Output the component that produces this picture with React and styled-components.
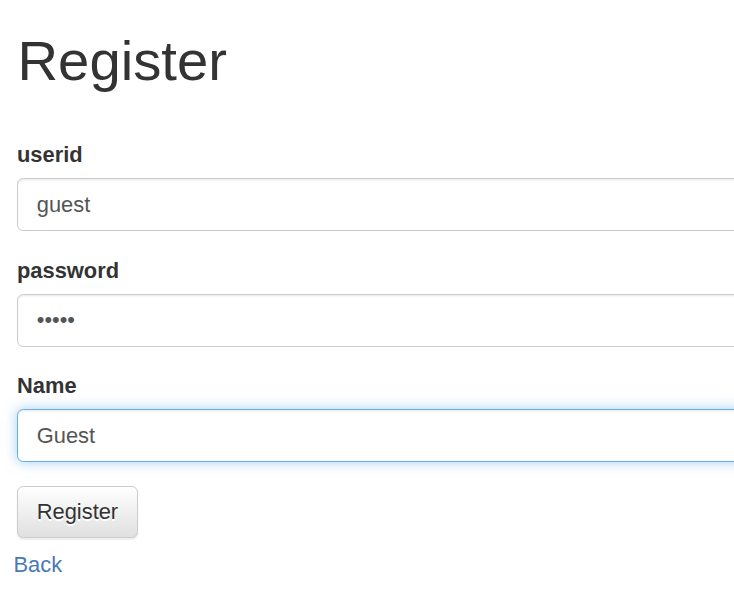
import React from 'react';
import styled, { createGlobalStyle } from 'styled-components';

const GlobalStyle = createGlobalStyle`
  html, body {
    margin: 0;
    padding: 0;
    background: #ffffff;
    overflow: hidden;
  }
  body {
    font-family: "Liberation Sans", Arial, Helvetica, sans-serif;
    font-size: 21.875px;
    line-height: 31.25px;
    color: #333333;
  }
  * {
    box-sizing: border-box;
  }
`;

export const Page = styled.div`
  padding: 29.5px 0 0 13.5px;
  width: 900px;
`;

export const Title = styled.h1`
  margin: 0 0 47.5px 4px;
  font-size: 56.25px;
  line-height: 62px;
  font-weight: 500;
  color: #333333;
`;

export const Form = styled.form`
  padding-left: 3.5px;
  margin: 0;
`;

export const FormGroup = styled.div`
  margin-bottom: 23.4px;
`;

export const Label = styled.label`
  display: block;
  margin-bottom: 7.8px;
  font-weight: bold;
  line-height: 31.25px;
`;

export const Input = styled.input`
  display: block;
  width: 100%;
  height: 53.1px;
  padding: 9.4px 18.75px;
  font-family: inherit;
  font-size: 21.875px;
  line-height: 31.25px;
  color: #555555;
  background: #ffffff;
  border: 1px solid ${(p) => (p.$focused ? '#66afe9' : '#cccccc')};
  border-radius: 6.25px;
  outline: none;
  box-shadow: ${(p) =>
    p.$focused
      ? 'inset 0 1.5px 1.5px rgba(0,0,0,.075), 0 0 12.5px rgba(102,175,233,.6)'
      : 'inset 0 1.5px 1.5px rgba(0,0,0,.075)'};
`;

export const Button = styled.button`
  display: inline-block;
  padding: 9.4px 18.75px;
  font-family: inherit;
  font-size: 21.875px;
  line-height: 31.25px;
  color: #333333;
  text-shadow: 0 1.5px 0 #ffffff;
  background-image: linear-gradient(to bottom, #ffffff 0, #e0e0e0 100%);
  border: 1px solid #cccccc;
  border-radius: 6.25px;
  box-shadow: inset 0 1.5px 0 rgba(255,255,255,.15), 0 1.5px 1.5px rgba(0,0,0,.075);
  cursor: pointer;
`;

export const BackLink = styled.a`
  display: block;
  margin-top: 11.5px;
  color: #4a78b5;
  text-decoration: none;
  line-height: 31.25px;
`;

export default function App() {
  return (
    <>
      <GlobalStyle />
      <Page>
        <Title>Register</Title>
        <Form onSubmit={(e) => e.preventDefault()}>
          <FormGroup>
            <Label htmlFor="userid">userid</Label>
            <Input id="userid" type="text" defaultValue="guest" readOnly />
          </FormGroup>
          <FormGroup>
            <Label htmlFor="password">password</Label>
            <Input id="password" type="password" defaultValue="guest" readOnly />
          </FormGroup>
          <FormGroup>
            <Label htmlFor="name">Name</Label>
            <Input id="name" type="text" defaultValue="Guest" $focused readOnly />
          </FormGroup>
          <Button type="submit">Register</Button>
        </Form>
        <BackLink href="#">Back</BackLink>
      </Page>
    </>
  );
}
